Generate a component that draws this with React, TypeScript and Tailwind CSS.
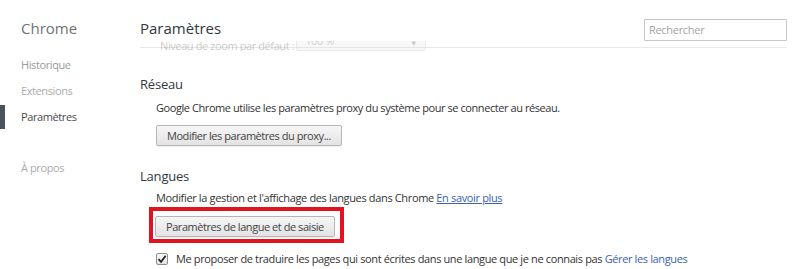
import React from "react";

const font = { fontFamily: '"Open Sans", "Noto Sans", sans-serif' };

function Btn({ children }: { children: React.ReactNode }) {
  return (
    <button className="h-[21px] px-[10px] rounded-[2px] border border-[#b5b5b5] bg-gradient-to-b from-[#f6f6f6] to-[#e3e3e3] text-[11px] tracking-[-0.45px] text-[#444] leading-none shadow-[0_1px_0_rgba(0,0,0,0.06)]">
      {children}
    </button>
  );
}

export default function App() {
  return (
    <div style={font} className="w-[799px] h-[269px] bg-white flex overflow-hidden">
      {/* Sidebar */}
      <div className="w-[140px] shrink-0 flex flex-col">
        <div className="pt-[18px] pl-[21px] h-[38px] text-[15px] leading-[20px] text-[#6e7277]">Chrome</div>
        <div className="mt-[14px] flex flex-col text-[11px] tracking-[-0.4px] leading-[16px]">
          <div className="h-[26px] flex items-center pl-[21px] text-[#9b9b9b]">Historique</div>
          <div className="h-[26px] flex items-center pl-[21px] text-[#ababab]">Extensions</div>
          <div className="h-[24px] my-px flex items-center pl-[16px] border-l-[5px] border-[#4a525d] text-[#4a4a4a]">Paramètres</div>
          <div className="mt-[25px] h-[26px] flex items-center pl-[21px] text-[#ababab]">À propos</div>
        </div>
      </div>

      {/* Main */}
      <div className="w-[647px] shrink-0 flex flex-col">
        <div className="pt-[18px] h-[41px] flex items-start justify-between">
          <div className="text-[15px] leading-[20px] text-[#303942]">Paramètres</div>
          <div className="mt-px w-[143px] h-[22px] border border-[#c6c6c6] rounded-[1px] flex items-center px-[4px] text-[11px] tracking-[-0.3px] text-[#a3a3a3]">
            Rechercher
          </div>
        </div>

        {/* faded strip under header */}
        <div className="relative h-[10px] overflow-hidden">
          <div className="absolute left-0 right-0 top-[6px] h-px bg-[#e8e8e8]" />
          <div className="relative h-[10px] flex items-end pl-[20px] opacity-25">
            <div className="h-[20px] flex items-end gap-[8px] text-[11px] tracking-[-0.4px] text-[#333]">
              <span className="leading-[16px] mb-[-3px]">Niveau de zoom par défaut :</span>
              <div className="ml-[-6px] w-[130px] h-[20px] border border-[#aaa] rounded-[2px] bg-gradient-to-b from-[#f6f6f6] to-[#dedede] flex items-end justify-between px-[8px] pb-[1px]">
                <span>100 %</span>
                <span className="text-[8px]">▼</span>
              </div>
            </div>
          </div>
        </div>

        {/* Réseau */}
        <div className="mt-[24px] text-[13px] leading-[18px] tracking-[-0.2px] text-[#303942]">Réseau</div>
        <div className="pl-[16px] flex flex-col items-start">
          <div className="mt-[7px] text-[11px] leading-[16px] tracking-[-0.43px] text-[#333]">
            Google Chrome utilise les paramètres proxy du système pour se connecter au réseau.
          </div>
          <div className="mt-[6px]">
            <Btn>Modifier les paramètres du proxy...</Btn>
          </div>
        </div>

        {/* Langues */}
        <div className="mt-[21px] text-[13px] leading-[18px] tracking-[-0.2px] text-[#303942]">Langues</div>
        <div className="pl-[15px] flex flex-col items-start">
          <div className="mt-[5px] pl-px text-[11px] leading-[16px] tracking-[-0.35px] text-[#333]">
            Modifier la gestion et l'affichage des langues dans Chrome{" "}
            <span className="text-[#3a61b5] underline">En savoir plus</span>
          </div>
          <div className="relative mt-[7px]">
            <Btn>
              <span>Paramètres de langue et de saisie</span>
            </Btn>
            <div className="absolute left-[-6px] top-[-6px] right-[-9px] bottom-[-6px] border-[4px] border-[#e0141e]" />
          </div>
          <div className="mt-[14px] pl-px flex items-center h-[16px]">
            <div className="w-[12px] h-[12px] border border-[#8f8f8f] rounded-[2px] bg-gradient-to-b from-[#fafafa] to-[#e2e2e2] flex items-center justify-center">
              <svg width="10" height="10" viewBox="0 0 10 10">
                <path d="M1.5 5.2 L4 7.8 L8.7 1.8" fill="none" stroke="#222" strokeWidth="1.8" />
              </svg>
            </div>
            <span className="ml-[8px] text-[11px] leading-[16px] tracking-[-0.37px] text-[#333]">
              Me proposer de traduire les pages qui sont écrites dans une langue que je ne connais pas{" "}
              <span className="text-[#3a61b5]">Gérer les langues</span>
            </span>
          </div>
        </div>
      </div>
    </div>
  );
}
